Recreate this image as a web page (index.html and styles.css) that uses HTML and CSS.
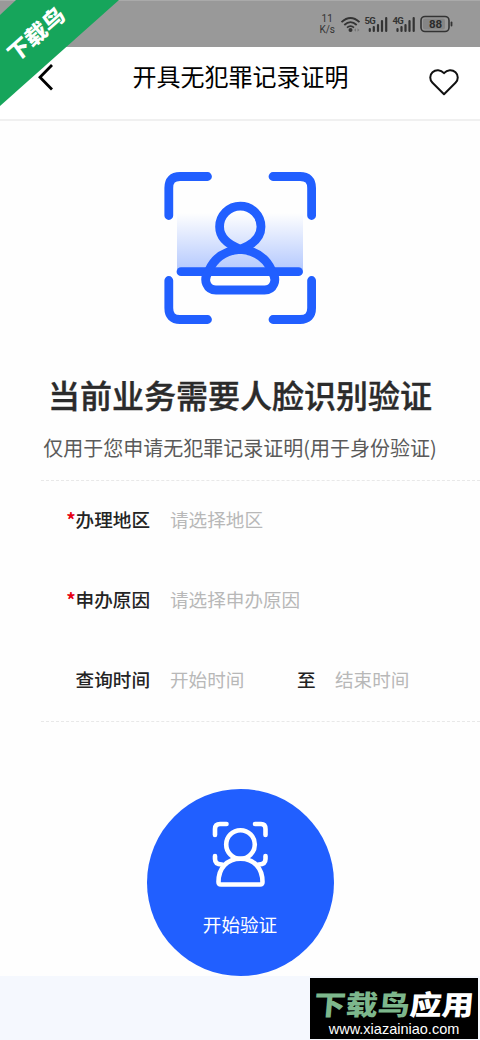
FILE: index.html
```html
<!DOCTYPE html>
<html lang="zh-CN">
<head>
<meta charset="utf-8">
<title>开具无犯罪记录证明</title>
<link rel="stylesheet" href="styles.css">
</head>
<body>
<div class="screen">
  <div class="status">
    <div class="speed"><span>11</span><span>K/s</span></div>
    <svg class="status-icons" width="118" height="24" viewBox="0 0 118 24">
      <g fill="none" stroke="#333" stroke-width="1.8">
        <path d="M1.5 10.2Q10.5 1.8 19.5 10.2"/>
        <path d="M4.3 13Q10.5 7.2 16.7 13"/>
        <path d="M7 15.6Q10.5 12.6 14 15.6"/>
      </g>
      <circle cx="10.5" cy="18" r="2" fill="#333"/>
      <path d="M14 18l2-1.7v3.4zM19.5 18l-2-1.7v3.4z" fill="#777"/>
      <g stroke="#333" stroke-width="2.2" stroke-linecap="round">
        <path d="M29.8 17v2M33.8 15v4M38 13v6M42 9v10M46.2 6v13"/>
        <path d="M57.5 17v2M61.5 15v4M65.5 13v6M69.5 9v10M73.7 6v13"/>
      </g>
      <text class="net" x="24.5" y="12">5G</text>
      <text class="net" x="52.5" y="12">4G</text>
      <rect x="81" y="4.5" width="28" height="15" rx="4" fill="none" stroke="#333" stroke-width="1.6"/>
      <rect x="83" y="6.5" width="22" height="11" rx="2" fill="#858585"/>
      <path d="M111.5 10.5v3" stroke="#333" stroke-width="1.8" stroke-linecap="round"/>
      <text class="charge" x="89" y="16.3">88</text>
    </svg>
  </div>

  <header class="nav">
    <svg class="back" width="20" height="30" viewBox="0 0 20 30"><path d="M16 3L4 15.2L16 27.5" fill="none" stroke="#000" stroke-width="2.8"/></svg>
    <h1 class="nav-title">开具无犯罪记录证明</h1>
    <svg class="heart" width="32" height="30" viewBox="0 0 32 30"><path d="M16 27.3L4.5 15.8C1.5 12.8 1.5 8 4.5 5.2C7.8 2.2 12.6 2.4 16 6.2C19.4 2.4 24.2 2.2 27.5 5.2C30.5 8 30.5 12.8 27.5 15.8Z" fill="none" stroke="#111" stroke-width="2" stroke-linejoin="round"/></svg>
  </header>

  <main class="content">
    <svg class="scan" width="156" height="156" viewBox="0 0 156 156">
      <defs>
        <linearGradient id="glow" x1="0" y1="0" x2="0" y2="1">
          <stop offset="0" stop-color="#215fff" stop-opacity="0"/>
          <stop offset="1" stop-color="#215fff" stop-opacity=".35"/>
        </linearGradient>
      </defs>
      <rect x="15" y="41" width="126" height="60" fill="url(#glow)"/>
      <g fill="none" stroke="#215fff" stroke-width="8.8" stroke-linecap="round" stroke-linejoin="round">
        <path d="M6.8 43.5V16Q6.8 4.5 18 4.5H45.5M111 4.5H138Q149.6 4.5 149.6 16V43.5M149.6 108.5V136Q149.6 147.5 138 147.5H111M45.5 147.5H18Q6.8 147.5 6.8 136V108.5"/>
        <path d="M19 99.7H136.5"/>
        <path d="M78.3 77.3C91 72.5 99 66 99 54.8A20.6 20.6 0 0 0 57.6 54.8C57.6 66 65.6 72.5 78.3 77.3Z"/>
        <path d="M46.8 98.5C52 87 62 78.5 78.3 77.3C94.5 78.5 104.5 87 109.8 98.5"/>
        <path d="M46.5 100C40.5 108 45 118 54 118H102.5C111.5 118 116 108 110 100"/>
      </g>
    </svg>
    <h2 class="headline">当前业务需要人脸识别验证</h2>
    <p class="purpose">仅用于您申请无犯罪记录证明(用于身份验证)</p>

    <form class="form">
      <div class="row"><label class="label"><b class="star">*</b>办理地区</label><span class="hint">请选择地区</span></div>
      <div class="row"><label class="label"><b class="star">*</b>申办原因</label><span class="hint">请选择申办原因</span></div>
      <div class="row"><label class="label">查询时间</label><span class="hint start">开始时间</span><span class="to">至</span><span class="hint">结束时间</span></div>
    </form>

    <div class="verify">
      <svg width="58" height="68" viewBox="0 0 58 68">
        <g fill="none" stroke="#fff" stroke-width="4.6" stroke-linecap="round" stroke-linejoin="round">
          <path d="M4 15V9Q4 4 9 4H15.5M44 4H50Q54.5 4 54.5 9V15M4 36V39Q4 44.5 11 44.5M54.5 36V39Q54.5 44.5 47.5 44.5"/>
          <circle cx="29.5" cy="24.5" r="14.3"/>
          <path d="M7.5 62C7.5 48 16 38.7 29.5 38.7S51.5 48 51.5 62Q51.5 64.5 49 64.5H10Q7.5 64.5 7.5 62Z"/>
        </g>
      </svg>
      <span class="verify-text">开始验证</span>
    </div>
  </main>
  <footer class="bottom"></footer>

  <div class="ribbon"></div>
  <span class="ribbon-text">下载鸟</span>
  <div class="watermark">
    <div class="brand"><span class="brand-green">下载鸟</span>应用</div>
    <div class="site">www.xiazainiao.com</div>
  </div>
</div>
</body>
</html>
```

FILE: styles.css
```css
* { box-sizing: border-box; }
body { margin: 0; background: #fff; font-family: "Noto Sans CJK SC", sans-serif; }
.screen { position: relative; width: 480px; height: 1040px; overflow: hidden; display: flex; flex-direction: column; background: #fefefe; }

.status { height: 47px; flex: none; background: #999; border-top: 1px solid #aaa; display: flex; justify-content: flex-end; align-items: center; gap: 5px; padding-right: 22px; }
.speed { display: flex; flex-direction: column; align-items: center; gap: 1px; font: 400 10px/10px Roboto, sans-serif; color: #333; padding-top: 1px; }
.status-icons { display: block; }
.net { font: 700 9.5px Roboto, sans-serif; fill: #333; letter-spacing: -.8px; }
.charge { font: 700 11.5px Roboto, sans-serif; fill: #2b2b2b; }

.nav { height: 74px; flex: none; display: flex; align-items: flex-start; justify-content: space-between; padding: 15px 20px 0 35px; background: #fff; border-bottom: 2px solid #f0f0f0; }
.back { display: block; margin-left: 1px; }
.nav-title { margin: -1px 0 0; padding-right: 3px; font-size: 24px; line-height: 30px; font-weight: 400; color: #000; }
.heart { display: block; margin-top: 5px; }

.content { flex: 1; display: flex; flex-direction: column; align-items: center; min-height: 0; }
.scan { display: block; margin-top: 51px; flex: none; }
.headline { margin: 42px 0 0; font-size: 32px; line-height: 48px; font-weight: 500; color: #2b2b2b; -webkit-text-stroke: .4px #2b2b2b; white-space: nowrap; }
.purpose { margin: 15px 0 0; font-size: 20px; line-height: 30px; color: #5a5a5a; white-space: nowrap; }
.form { align-self: stretch; margin: 17px 0 0 41px; border-top: 1px dashed #e8e8e8; border-bottom: 1px dashed #e8e8e8; font-size: 18.6px; line-height: 28px; height: 242px; flex: none; }
.row { display: flex; align-items: center; height: 80px; padding-bottom: 4px; }
.label { width: 109px; margin-right: 20px; text-align: right; font-weight: 500; color: #242424; }
.star { color: #e60012; font-weight: 700; }
.hint { color: #b8b8b8; font-weight: 400; }
.start { width: 127px; }
.to { width: 38px; font-weight: 500; color: #222; }
.verify { width: 187px; height: 187px; flex: none; margin-top: 67px; border-radius: 50%; background: #215fff; display: flex; flex-direction: column; align-items: center; padding-top: 31px; color: #fff; }
.verify-text { margin-top: 22px; font-size: 18.6px; line-height: 28px; }
.bottom { height: 64px; flex: none; background: #f5f8fe; }

.ribbon { position: absolute; left: 0; top: 0; width: 119px; height: 106px; background: #16a55b; clip-path: polygon(0 15px, 16px 0, 119px 0, 0 106px); }
.ribbon-text { position: absolute; left: 1px; top: 22px; width: 69px; text-align: center; font-size: 23px; line-height: 23px; font-weight: 900; color: #fff; white-space: nowrap; transform: rotate(-41.7deg) skewX(-6deg) scaleY(.92); }
.watermark { position: absolute; left: 310px; top: 978px; width: 168px; height: 61px; background: #000; color: #fff; display: flex; flex-direction: column; align-items: center; }
.brand { font-size: 32px; line-height: 34px; font-weight: 900; margin-top: 8px; height: 33px; transform: skewX(-5deg) scaleY(.86); white-space: nowrap; }
.brand-green { color: #7db78c; }
.site { font: 14.5px/20px "Liberation Sans", sans-serif; }
```
